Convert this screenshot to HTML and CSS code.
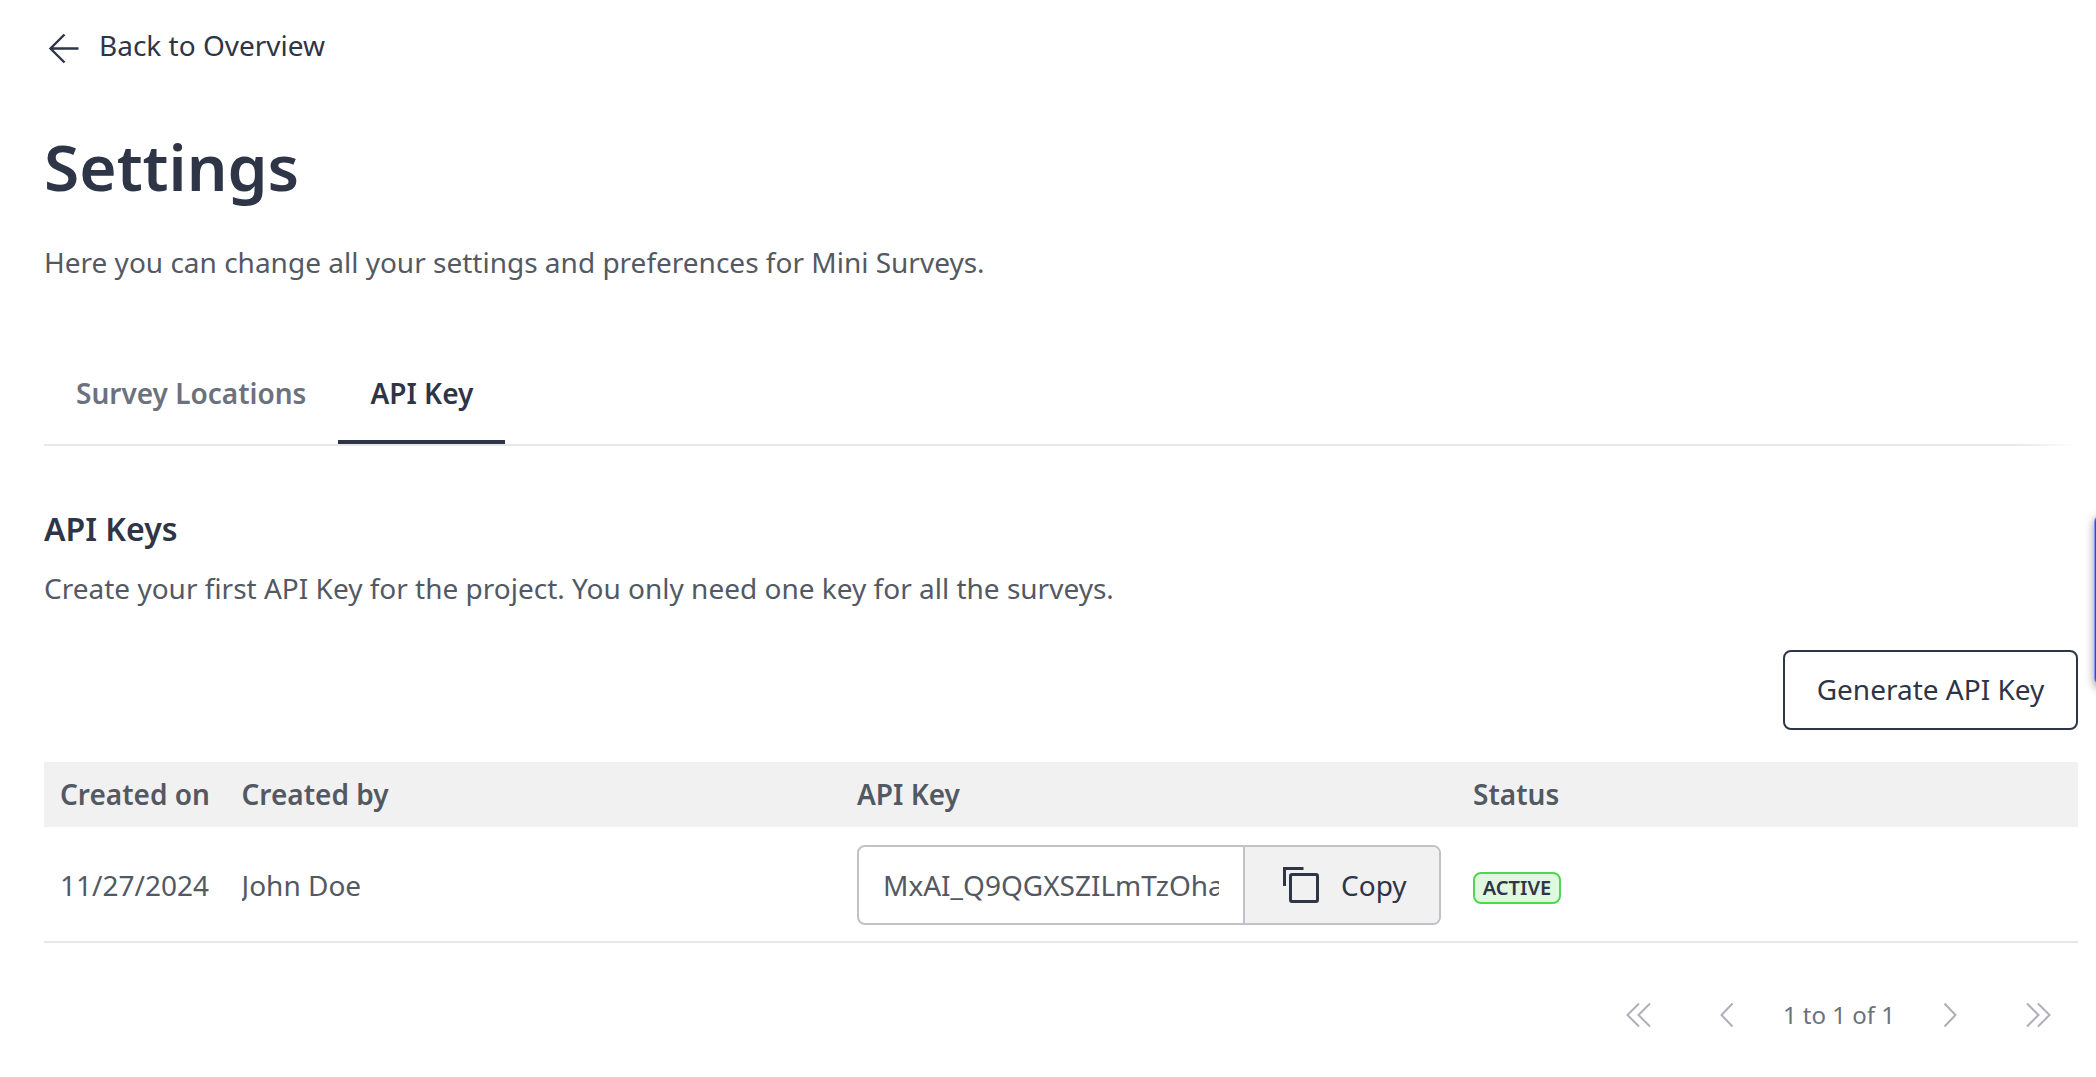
FILE: index.html
```html
<!DOCTYPE html>
<html lang="en">
<head>
<meta charset="utf-8">
<title>Settings</title>
<link rel="stylesheet" href="styles.css">
</head>
<body>
<main class="page">
  <a class="back">
    <svg class="back-icon" viewBox="0 0 38 38"><path d="M33.500 18.500H5M19.500 4.500L5.500 18.500L19.500 32.500"/></svg>
    <span>Back to Overview</span>
  </a>
  <h1 class="title">Settings</h1>
  <p class="lead">Here you can change all your settings and preferences for Mini Surveys.</p>
  <nav class="tabs">
    <a class="tab">Survey Locations</a>
    <a class="tab tab-active">API Key</a>
  </nav>
  <section>
    <h2 class="subtitle">API Keys</h2>
    <p class="text">Create your first API Key for the project. You only need one key for all the surveys.</p>
    <div class="actions"><button class="generate">Generate API Key</button></div>
    <div class="table">
      <div class="row head">
        <div class="cell">Created on</div>
        <div class="cell">Created by</div>
        <div class="cell">API Key</div>
        <div class="cell">Status</div>
      </div>
      <div class="row body-row">
        <div class="cell">11/27/2024</div>
        <div class="cell"><span class="clip">John Doe</span></div>
        <div class="cell">
          <div class="key-field">
            <div class="key-box"><div class="key-value">MxAI_Q9QGXSZILmTzOha</div></div>
            <button class="copy">
              <svg class="copy-icon" viewBox="0 0 40 40"><path d="M3.500 21V3.500H22.500"/><rect x="9.500" y="9.500" width="27" height="27" rx="1.500"/></svg>
              <span>Copy</span>
            </button>
          </div>
        </div>
        <div class="cell"><span class="badge">ACTIVE</span></div>
      </div>
    </div>
    <div class="pager">
      <svg class="chevrons" viewBox="0 0 26 26"><path d="M13 1.500L1.500 13L13 24.500M24 1.500L12.500 13L24 24.500"/></svg>
      <svg class="chevron prev" viewBox="0 0 14 26"><path d="M12.500 1.500L1.500 13L12.500 24.500"/></svg>
      <span class="pager-text">1 to 1 of 1</span>
      <svg class="chevron next" viewBox="0 0 14 26"><path d="M1.500 1.500L12.500 13L1.500 24.500"/></svg>
      <svg class="chevrons" viewBox="0 0 26 26"><path d="M2 1.500L13.500 13L2 24.500M13 1.500L24.500 13L13 24.500"/></svg>
    </div>
  </section>
</main>
<div class="side-tab"></div>
</body>
</html>
```
FILE: styles.css
```css
* { box-sizing: border-box; }
body {
  margin: 0;
  height: 1077px;
  overflow: hidden;
  background: #fff;
  color: #535963;
  font: 28px/40px "Noto Sans", sans-serif;
}
h1, h2, p { margin: 0; }
button { font: inherit; color: #2e3546; }
svg { flex: none; fill: none; stroke-width: 2; }
.page { padding: 25px 18px 0 44px; }
.back { display: flex; gap: 16px; height: 40px; padding-left: 1px; color: #2e3546; }
.back-icon { width: 38px; height: 38px; margin-top: 5px; stroke: #2e3546; stroke-width: 2.400; }
.title { margin-top: 62px; font-size: 64px; line-height: 80px; font-weight: 600; color: #2e3546; }
.lead { margin-top: 35px; }
.tabs {
  display: flex;
  margin-top: 58px;
  padding-bottom: 2px;
  background: linear-gradient(to right, #e8e8e9 calc(100% - 64px), #e8e8e900) bottom / 100% 2px no-repeat;
}
.tab { padding: 33px 32px 27px; border-bottom: 4px solid transparent; font-weight: 600; color: #6c717e; }
.tab-active { color: #2e3546; border-color: #2e3546; }
.subtitle { margin-top: 63px; font-size: 32px; font-weight: 600; color: #2e3546; }
.text { margin-top: 19px; }
.actions { display: flex; justify-content: flex-end; margin-top: 42px; }
.generate { width: 295px; height: 80px; padding: 0 0 2px; border: 2px solid #2e3546; border-radius: 8px; background: #fff; }
.table { margin-top: 32px; }
.row { display: grid; grid-template-columns: 181.500px 615.500px 616px 1fr; align-items: center; }
.cell { padding: 0 16px; white-space: nowrap; }
.head { height: 65px; padding-bottom: 2px; background: #f1f1f2; font-weight: 600; }
.body-row { height: 116px; padding-top: 1px; border-bottom: 2px solid #e6e6e7; }
.clip { display: block; overflow: hidden; }
.key-field { display: flex; height: 80px; border: 2px solid #c1c2c9; border-radius: 8px; overflow: hidden; }
.key-box { flex: 1; min-width: 0; padding: 18px 24px; }
.key-value { overflow: hidden; white-space: nowrap; }
.copy {
  display: flex;
  align-items: center;
  gap: 20px;
  width: 196px;
  padding: 0 0 0 36px;
  border: 0;
  border-left: 2px solid #c1c2c9;
  background: #f1f1f2;
}
.copy-icon { width: 40px; height: 40px; stroke: #2e3546; stroke-width: 3; }
.badge {
  display: block;
  width: 88px;
  height: 32px;
  margin-top: 7px;
  border: 2px solid #4fd84f;
  border-radius: 8px;
  background: #e0f8e0;
  color: #2e3546;
  font-size: 20px;
  line-height: 27px;
  font-weight: 600;
  text-align: center;
}
.pager { display: flex; align-items: center; height: 32px; margin-top: 56px; padding-right: 27px; justify-content: flex-end; color: #6c717e; font-size: 24px; line-height: 32px; stroke: #aeafb8; }
.chevrons { width: 26px; height: 26px; }
.chevron { width: 14px; height: 26px; }
.prev { margin: 0 49px 0 68px; }
.next { margin: 0 68px 0 48px; }
.side-tab {
  position: absolute;
  left: 2094px;
  top: 514px;
  width: 60px;
  height: 172px;
  border: 1px solid #7d92f0;
  border-radius: 8px 0 0 8px;
  background: #2b4bd3;
  box-shadow: 0 3px 10px rgba(0, 0, 0, .4);
}
```
